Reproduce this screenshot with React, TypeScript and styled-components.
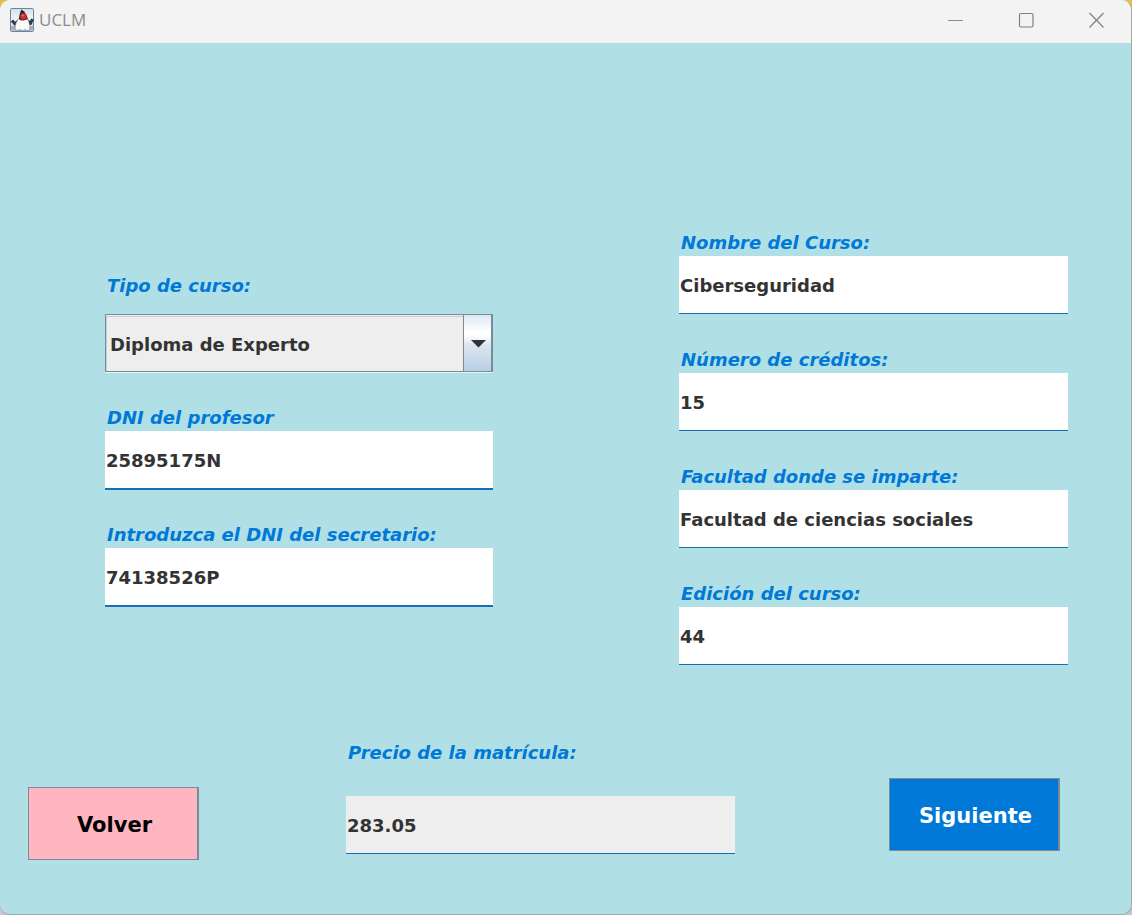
import React, { useId } from "react";
import styled, { createGlobalStyle } from "styled-components";

const BLUE = "#0078d7";
const STEEL = "#7a8a99";

const GlobalStyle = createGlobalStyle`
  *, *::before, *::after { box-sizing: border-box; }
  body {
    margin: 0;
    background: linear-gradient(#e3c04e 0 40px, #c6c6cc 40px);
    font-family: "DejaVu Sans", Verdana, sans-serif;
  }
`;

const Frame = styled.div`
  min-height: 100vh;
  display: flex;
  flex-direction: column;
  overflow: hidden;
  border: solid #a2a9ab;
  border-width: 0 1px 1px 0;
  border-radius: 10px;
  background: #b0e0e6;
`;

const TitleBar = styled.header`
  height: 43px;
  display: flex;
  align-items: center;
  padding: 0 0 3px 10px;
  background: #f3f3f3;
`;

const Title = styled.h1`
  flex: 1;
  margin: 0 0 0 5px;
  font: 400 17px/24px "Open Sans", "Noto Sans", sans-serif;
  color: #8c8c8c;
`;

const WindowButton = styled.button`
  width: 70px;
  height: 40px;
  padding: 0;
  border: 0;
  background: transparent;
  display: grid;
  place-items: center;
`;

const Form = styled.form`
  flex: 1;
  padding-top: 185px;
`;

const Columns = styled.div`
  display: grid;
  grid-template-columns: 388fr 389fr;
  column-gap: 186px;
  padding: 0 63px 0 105px;
`;

const Column = styled.div<{ $top?: number; $gap: number }>`
  display: flex;
  flex-direction: column;
  gap: ${(p) => p.$gap}px;
  padding-top: ${(p) => p.$top ?? 0}px;
`;

const FieldBox = styled.div<{ $gap?: number }>`
  display: flex;
  flex-direction: column;
  gap: ${(p) => p.$gap ?? 0}px;
`;

const Label = styled.label`
  padding: 2px 0 0 2px;
  font-size: 18px;
  font-weight: 700;
  font-style: italic;
  line-height: 26px;
  color: ${BLUE};
  white-space: nowrap;
`;

const TextInput = styled.input<{ $line?: number }>`
  width: 100%;
  height: ${(p) => 57 + (p.$line ?? 1)}px;
  padding: 2px 1px 0;
  border: 0;
  border-bottom: ${(p) => p.$line ?? 1}px solid #146fb6;
  border-radius: 0;
  outline: 0;
  background: ${(p) => (p.readOnly ? "#eeeeee" : "#ffffff")};
  color: #333333;
  font: 700 18px "DejaVu Sans", Verdana, sans-serif;
`;

const SelectBox = styled.div`
  position: relative;
  height: 59px;
  border-bottom: 1px solid #e4f4f7;
`;

const Select = styled.select`
  appearance: none;
  display: block;
  width: 100%;
  height: 58px;
  padding: 2px 34px 0 4px;
  border: 1px solid ${STEEL};
  border-right-width: 2px;
  border-radius: 0;
  outline: 0;
  background: #eeeeee;
  box-shadow: inset 0 1px 0 #eeeeee, inset 1px 2px 0 #b8cfe5;
  color: #333333;
  font: 700 18px "DejaVu Sans", Verdana, sans-serif;
`;

const Arrow = styled.span`
  position: absolute;
  top: 1px;
  right: 2px;
  width: 28px;
  height: 56px;
  padding: 2px 0 0 1px;
  display: grid;
  place-items: center;
  border-left: 1px solid ${STEEL};
  background: linear-gradient(#dde8f3, #ffffff 30%, #ffffff 36%, #dae5f0 55%, #b8cfe5);
  pointer-events: none;
`;

const Footer = styled.div`
  display: grid;
  grid-template-columns: 171px 1fr 171px;
  align-items: start;
  padding: 73px 71px 54px 28px;
`;

const Price = styled.div`
  margin: 0 154px 0 147px;
`;

const ActionButton = styled.button<{ $primary?: boolean }>`
  height: 73px;
  margin-top: ${(p) => (p.$primary ? 40 : 49)}px;
  padding: 2px 0 0 3px;
  border: 1px solid ${STEEL};
  border-right-width: 2px;
  border-radius: 0;
  background: ${(p) => (p.$primary ? BLUE : "#ffb6c1")};
  color: ${(p) => (p.$primary ? "#ffffff" : "#000000")};
  font: 700 21px "DejaVu Sans", Verdana, sans-serif;
`;

function DukeIcon() {
  return (
    <svg width="24" height="24" viewBox="0 0 24 24" aria-hidden="true">
      <defs>
        <linearGradient id="sky" x1="0" y1="0" x2="0" y2="1">
          <stop offset="0" stopColor="#d3dee8" />
          <stop offset="0.5" stopColor="#f4f7fa" />
          <stop offset="1" stopColor="#b4c0cb" />
        </linearGradient>
      </defs>
      <rect x="0.5" y="0.5" width="23" height="23" rx="1" fill="url(#sky)" stroke="#6486a5" />
      <path d="M1 18.500c4-1.500 17-1.500 22 0v2.500c-5 2-16 2-22 0z" fill="#a3acb4" />
      <path d="M9 12.500 5 16 2 12.500M17 12.500l3.500 3 2-4.500" fill="none" stroke="#343a41" strokeWidth="3" strokeLinejoin="round" />
      <path d="M9 10C6 13.500 5 17.500 5.200 21.500c1.800 1.200 3.200.8 4.300-.2 2 1.700 4 1.700 5.500.2 1.800 1.300 3.500 1.200 4.700-.3C20 17 19 13 17 10z" fill="#fafafa" stroke="#6d737a" strokeWidth="0.500" />
      <path d="M11.500 1.500C10 4.500 9.200 7.500 9 11.200c2.500 1.800 6.200 1.600 8.800-.4C17 7.500 15 3.500 11.500 1.500z" fill="#24262a" />
      <circle cx="13.500" cy="8.500" r="3.200" fill="#e0242c" />
      <circle cx="12.700" cy="7.500" r="0.900" fill="#f7868a" />
    </svg>
  );
}

type FieldProps = {
  label: string;
  value: string;
  line?: number;
  gap?: number;
  readOnly?: boolean;
};

function Field({ label, value, line, gap, readOnly }: FieldProps) {
  const id = useId();
  return (
    <FieldBox $gap={gap}>
      <Label htmlFor={id}>{label}</Label>
      <TextInput id={id} type="text" defaultValue={value} $line={line} readOnly={readOnly} />
    </FieldBox>
  );
}

export default function App() {
  return (
    <>
      <GlobalStyle />
      <Frame>
        <TitleBar>
          <DukeIcon />
          <Title>UCLM</Title>
          <WindowButton type="button" aria-label="Minimizar">
            <svg width="16" height="16" fill="none" stroke="#8c8c8c">
              <path d="M0 8.500h15" />
            </svg>
          </WindowButton>
          <WindowButton type="button" aria-label="Maximizar">
            <svg width="16" height="16" fill="none" stroke="#808080" strokeWidth="1.200">
              <rect x="1.500" y="1.500" width="13.500" height="13.500" rx="1.500" />
            </svg>
          </WindowButton>
          <WindowButton type="button" aria-label="Cerrar">
            <svg width="16" height="16" fill="none" stroke="#808080" strokeWidth="1.200">
              <path d="m1.500 1 14 14.500M15.500 1l-14 14.500" />
            </svg>
          </WindowButton>
        </TitleBar>
        <Form onSubmit={(e) => e.preventDefault()}>
          <Columns>
            <Column $top={43} $gap={30}>
              <FieldBox $gap={15}>
                <Label htmlFor="tipo">Tipo de curso:</Label>
                <SelectBox>
                  <Select id="tipo" defaultValue="Diploma de Experto">
                    <option>Diploma de Experto</option>
                  </Select>
                  <Arrow aria-hidden="true">
                    <svg width="15" height="8">
                      <path d="M0 0h15L7.500 7.500z" fill="#333333" />
                    </svg>
                  </Arrow>
                </SelectBox>
              </FieldBox>
              <Field label="DNI del profesor" value="25895175N" line={2} />
              <Field label="Introduzca el DNI del secretario:" value="74138526P" line={2} />
            </Column>
            <Column $gap={31}>
              <Field label="Nombre del Curso:" value="Ciberseguridad" />
              <Field label="Número de créditos:" value="15" />
              <Field label="Facultad donde se imparte:" value="Facultad de ciencias sociales" />
              <Field label="Edición del curso:" value="44" />
            </Column>
          </Columns>
          <Footer>
            <ActionButton type="button">Volver</ActionButton>
            <Price>
              <Field label="Precio de la matrícula:" value="283.05" gap={30} readOnly />
            </Price>
            <ActionButton type="submit" $primary>
              Siguiente
            </ActionButton>
          </Footer>
        </Form>
      </Frame>
    </>
  );
}
